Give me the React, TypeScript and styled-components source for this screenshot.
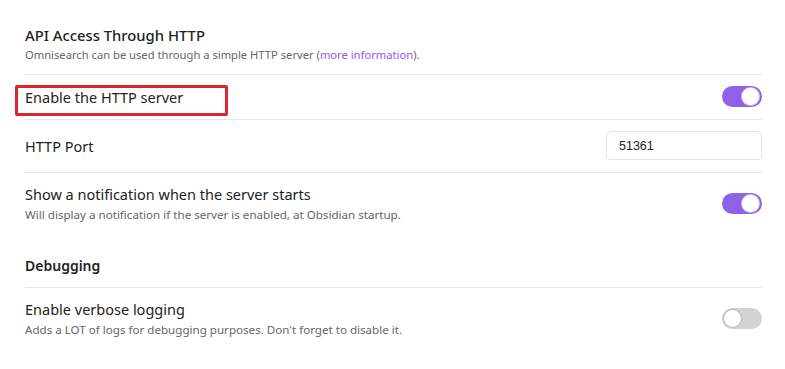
import React from "react";
import styled, { createGlobalStyle } from "styled-components";

const GlobalStyle = createGlobalStyle`
  html, body {
    margin: 0;
    padding: 0;
    background: #ffffff;
  }
  body {
    font-family: "Noto Sans", "Open Sans", sans-serif;
    color: #222222;
  }
`;

const Page = styled.div`
  width: 737px;
  padding: 25px 23px 20px 25px;
`;

const Heading = styled.div<{ $first?: boolean }>`
  padding: ${(p) => (p.$first ? "0 0 11px" : "21px 0 11px")};
  border-bottom: 1px solid #e6e6e6;
`;

const HeadingTitle = styled.div<{ $strong?: boolean }>`
  font-size: ${(p) => (p.$strong ? "14px" : "14.8px")};
  font-weight: ${(p) => (p.$strong ? 600 : 500)};
  line-height: 20px;
  color: #222222;
`;

const HeadingDesc = styled.div`
  font-size: 11.2px;
  line-height: 17px;
  margin-top: 1px;
  color: #666666;
`;

const Link = styled.a`
  color: #8a5cf5;
  text-decoration: none;
`;

const Row = styled.div<{ $first?: boolean }>`
  display: flex;
  align-items: center;
  justify-content: space-between;
  padding: 11px 0 12px;
  border-top: ${(p) => (p.$first ? "none" : "1px solid #e6e6e6")};
`;

const Info = styled.div`
  position: relative;
  display: flex;
  flex-direction: column;
`;

const Name = styled.div`
  font-size: 14.5px;
  line-height: 20px;
  color: #222222;
`;

const Desc = styled.div`
  font-size: 11.6px;
  line-height: 17px;
  padding-top: 2px;
  color: #666666;
`;

const Highlight = styled.div`
  position: absolute;
  left: -10px;
  top: -2px;
  width: 207px;
  height: 25px;
  border: 3px solid #d8262c;
  border-radius: 2px;
`;

const Toggle = styled.div<{ $on: boolean }>`
  position: relative;
  width: 40px;
  height: 21px;
  border-radius: 11px;
  background: ${(p) => (p.$on ? "#8e62e8" : "#d2d2d2")};
  flex-shrink: 0;

  &::after {
    content: "";
    position: absolute;
    top: 2px;
    left: ${(p) => (p.$on ? "20px" : "2px")};
    width: 17px;
    height: 17px;
    border-radius: 50%;
    background: #ffffff;
    box-shadow: ${(p) => (p.$on ? "0 0 0 1px rgba(255,255,255,0.6)" : "0 0 0 1px #b8b8b8")};
  }
`;

const PortInput = styled.input`
  box-sizing: border-box;
  width: 156px;
  height: 29px;
  padding: 0 12px;
  border: 1px solid #e3e3e3;
  border-radius: 5px;
  font-family: "Liberation Sans", Arial, sans-serif;
  font-size: 12.5px;
  color: #222222;
  background: #ffffff;
  outline: none;
`;

const App = () => {
  return (
    <>
      <GlobalStyle />
      <Page>
        <Heading $first>
          <HeadingTitle>API Access Through HTTP</HeadingTitle>
          <HeadingDesc>
            Omnisearch can be used through a simple HTTP server (
            <Link href="#">more information</Link>).
          </HeadingDesc>
        </Heading>

        <Row $first>
          <Info>
            <Name>Enable the HTTP server</Name>
            <Highlight />
          </Info>
          <Toggle $on />
        </Row>

        <Row>
          <Info>
            <Name>HTTP Port</Name>
          </Info>
          <PortInput defaultValue="51361" />
        </Row>

        <Row>
          <Info>
            <Name>Show a notification when the server starts</Name>
            <Desc>Will display a notification if the server is enabled, at Obsidian startup.</Desc>
          </Info>
          <Toggle $on />
        </Row>

        <Heading>
          <HeadingTitle $strong>Debugging</HeadingTitle>
        </Heading>

        <Row $first>
          <Info>
            <Name>Enable verbose logging</Name>
            <Desc>Adds a LOT of logs for debugging purposes. Don't forget to disable it.</Desc>
          </Info>
          <Toggle $on={false} />
        </Row>
      </Page>
    </>
  );
};

export default App;
